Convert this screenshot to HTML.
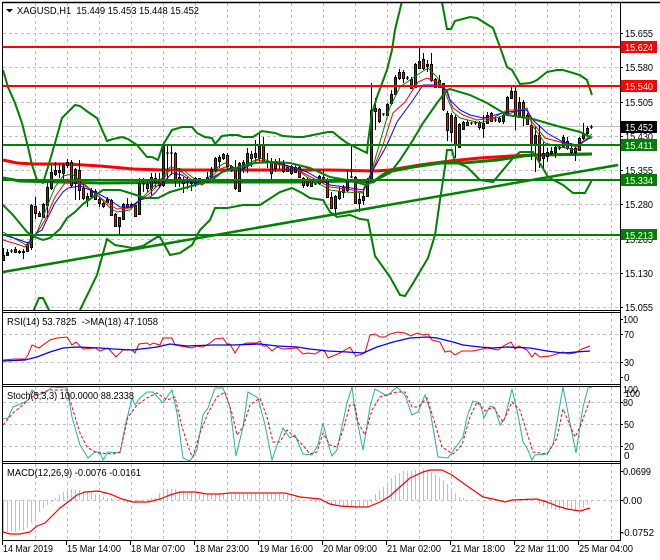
<!DOCTYPE html>
<html><head><meta charset="utf-8"><title>XAGUSD,H1</title>
<style>
html,body{margin:0;padding:0;background:#fff}
svg{display:block}
text{font-family:"Liberation Sans",sans-serif;font-size:10px;fill:#000}
.w{fill:#fff}
</style></head>
<body>
<svg width="660" height="560" viewBox="0 0 660 560" xmlns="http://www.w3.org/2000/svg">
<defs>
<clipPath id="m"><rect x="3" y="3" width="617" height="307"/></clipPath>
<clipPath id="s"><rect x="3" y="387" width="617" height="74"/></clipPath>
</defs>
<rect width="660" height="560" fill="#fff"/>
<!-- grid -->
<g fill="none" stroke="#c0c0c0" stroke-width="1" stroke-dasharray="3 3">
<path d="M35.5 3V310M67.5 3V310M99.5 3V310M131.5 3V310M163.5 3V310M195.5 3V310M227.5 3V310M259.5 3V310M291.5 3V310M323.5 3V310M355.5 3V310M387.5 3V310M419.5 3V310M451.5 3V310M483.5 3V310M515.5 3V310M547.5 3V310M579.5 3V310M611.5 3V310"/>
<path d="M35.5 313V384M67.5 313V384M99.5 313V384M131.5 313V384M163.5 313V384M195.5 313V384M227.5 313V384M259.5 313V384M291.5 313V384M323.5 313V384M355.5 313V384M387.5 313V384M419.5 313V384M451.5 313V384M483.5 313V384M515.5 313V384M547.5 313V384M579.5 313V384M611.5 313V384"/>
<path d="M35.5 387V461M67.5 387V461M99.5 387V461M131.5 387V461M163.5 387V461M195.5 387V461M227.5 387V461M259.5 387V461M291.5 387V461M323.5 387V461M355.5 387V461M387.5 387V461M419.5 387V461M451.5 387V461M483.5 387V461M515.5 387V461M547.5 387V461M579.5 387V461M611.5 387V461"/>
<path d="M35.5 464V540M67.5 464V540M99.5 464V540M131.5 464V540M163.5 464V540M195.5 464V540M227.5 464V540M259.5 464V540M291.5 464V540M323.5 464V540M355.5 464V540M387.5 464V540M419.5 464V540M451.5 464V540M483.5 464V540M515.5 464V540M547.5 464V540M579.5 464V540M611.5 464V540"/>
<path d="M3 33.5H620M3 67.5H620M3 102.5H620M3 136.5H620M3 170.5H620M3 204.5H620M3 239.5H620M3 273.5H620M3 307.5H620"/>
<path d="M3 334.5H620M3 362.5H620M3 402.5H620M3 424.5H620M3 446.5H620M3 500.5H620"/>
</g>
<path d="M3 126.5H620" stroke="#c0c0c0" stroke-width="1"/>
<g clip-path="url(#m)" fill="none">
<!-- slow MAs -->
<polyline stroke="#f00" stroke-width="3" points="3,160 17,163 33,164 67,164 100,166 133,169 163,170 200,170 233,170 267,170 300,170 330,170 375,171 390,170 420,165 450,161 480,158 510,156 540,155 592,154"/>
<polyline stroke="#008000" stroke-width="3" points="3,178 20,181 100,183 200,182 300,182 347,181 373,182 387,172 413,167 440,163 463,163 497,160 530,155 592,154"/>
<!-- candles -->
<path stroke="#000" stroke-width="1" d="M3.5 248V260M7.5 249V255M11.5 249V253M15.5 247V253M19.5 250V254M23.5 249V259M27.5 242V252M31.5 204V250M35.5 197V219M39.5 211V217M43.5 203V218M47.5 183V217M51.5 165V190M55.5 162V176M59.5 165V178M63.5 163V180M67.5 159V168M71.5 160V187M75.5 168V200M79.5 160V200M83.5 183V200M87.5 193V207M91.5 188V197M95.5 189V200M99.5 198V207M103.5 201V208M107.5 197V203M111.5 199V216M115.5 213V227M119.5 217V235M123.5 203V220M127.5 198V208M131.5 203V208M135.5 203V217M139.5 178V215M143.5 178V192M147.5 179V193M151.5 173V195M155.5 173V187M159.5 173V188M163.5 144V187M167.5 145V179M171.5 144V175M175.5 152V187M179.5 168V187M183.5 177V193M187.5 177V189M191.5 182V191M195.5 177V187M199.5 178V184M203.5 179V184M207.5 172V183M211.5 167V178M215.5 157V172M219.5 155V168M223.5 153V160M227.5 153V170M231.5 165V172M235.5 160V190M239.5 162V192M243.5 160V173M247.5 148V173M251.5 151V167M255.5 140V162M259.5 132V163M263.5 137V163M267.5 153V168M271.5 158V179M275.5 159V172M279.5 158V169M283.5 160V173M287.5 165V172M291.5 165V175M295.5 165V173M299.5 165V178M303.5 177V188M307.5 177V187M311.5 179V187M315.5 183V185M319.5 175V185M323.5 169V182M327.5 178V198M331.5 192V209M335.5 195V213M339.5 187V200M343.5 185V198M347.5 170V192M351.5 145V178M355.5 176V204M359.5 193V212M363.5 192V205M367.5 178V197M371.5 83V183M375.5 98V130M379.5 108V123M383.5 113V116M387.5 103V116M391.5 90V105M395.5 75V95M399.5 69V80M403.5 70V83M407.5 76V80M411.5 77V89M415.5 63V88M419.5 47V68M423.5 53V70M427.5 60V72M431.5 53V82M435.5 78V88M439.5 75V87M443.5 83V111M447.5 111V141M451.5 113V142M455.5 115V158M459.5 123V148M463.5 121V130M467.5 120V126M471.5 122V125M475.5 121V125M479.5 121V130M483.5 115V138M487.5 112V124M491.5 112V122M495.5 117V122M499.5 117V123M503.5 113V124M507.5 96V116M511.5 87V99M515.5 87V130M519.5 97V118M523.5 100V126M527.5 113V125M531.5 122V160M535.5 127V172M539.5 125V168M543.5 142V169M547.5 148V162M551.5 147V155M555.5 145V158M559.5 145V150M563.5 135V148M567.5 137V150M571.5 146V155M575.5 144V161M579.5 137V151M583.5 123V140M587.5 126V135M591.5 125V129M10 251h3M142 184h3M166 153h3M170 153h3M186 182h3M202 182h3M266 161h3M314 184h3M350 177h3M382 114h3M406 78h3M470 123h3M474 123h3M494 120h3M558 148h3M590 127h3"/>
<path stroke="#000" stroke-width="1" fill="#006400" d="M2.500 255.500h2v5h-2zM6.500 252.500h2v3h-2zM14.500 249.500h2v3h-2zM22.500 251.500h2v1h-2zM26.500 244.500h2v7h-2zM30.500 205.500h2v42h-2zM42.500 204.500h2v13h-2zM46.500 187.500h2v18h-2zM50.500 172.500h2v16h-2zM54.500 170.500h2v4h-2zM58.500 170.500h2v2h-2zM62.500 165.500h2v8h-2zM66.500 162.500h2v3h-2zM74.500 169.500h2v14h-2zM86.500 196.500h2v4h-2zM90.500 190.500h2v6h-2zM106.500 199.500h2v3h-2zM118.500 217.500h2v9h-2zM122.500 204.500h2v15h-2zM130.500 204.500h2v2h-2zM138.500 183.500h2v31h-2zM150.500 177.500h2v11h-2zM158.500 182.500h2v3h-2zM162.500 146.500h2v39h-2zM190.500 182.500h2v1h-2zM194.500 178.500h2v5h-2zM206.500 177.500h2v5h-2zM210.500 169.500h2v8h-2zM214.500 158.500h2v12h-2zM218.500 157.500h2v4h-2zM222.500 154.500h2v4h-2zM238.500 163.500h2v28h-2zM242.500 162.500h2v6h-2zM246.500 153.500h2v10h-2zM254.500 153.500h2v4h-2zM258.500 146.500h2v12h-2zM290.500 166.500h2v7h-2zM294.500 167.500h2v5h-2zM306.500 179.500h2v6h-2zM318.500 176.500h2v7h-2zM334.500 196.500h2v12h-2zM338.500 191.500h2v7h-2zM342.500 187.500h2v5h-2zM346.500 179.500h2v11h-2zM358.500 199.500h2v4h-2zM362.500 196.500h2v4h-2zM366.500 180.500h2v16h-2zM370.500 110.500h2v72h-2zM374.500 108.500h2v3h-2zM386.500 104.500h2v11h-2zM390.500 94.500h2v9h-2zM394.500 77.500h2v17h-2zM398.500 72.500h2v6h-2zM414.500 64.500h2v23h-2zM418.500 61.500h2v7h-2zM426.500 64.500h2v2h-2zM450.500 115.500h2v17h-2zM458.500 124.500h2v23h-2zM462.500 122.500h2v7h-2zM482.500 123.500h2v5h-2zM486.500 115.500h2v8h-2zM498.500 118.500h2v3h-2zM502.500 115.500h2v6h-2zM506.500 97.500h2v18h-2zM510.500 91.500h2v7h-2zM518.500 102.500h2v15h-2zM534.500 135.500h2v10h-2zM542.500 153.500h2v5h-2zM546.500 152.500h2v4h-2zM550.500 151.500h2v2h-2zM554.500 147.500h2v5h-2zM562.500 137.500h2v10h-2zM570.500 148.500h2v4h-2zM574.500 148.500h2v4h-2zM578.500 138.500h2v12h-2zM582.500 133.500h2v5h-2zM586.500 128.500h2v5h-2z"/>
<path stroke="#000" stroke-width="1" fill="#f00" d="M18.500 251.500h2v1h-2zM34.500 206.500h2v7h-2zM38.500 213.500h2v3h-2zM70.500 162.500h2v23h-2zM78.500 170.500h2v20h-2zM82.500 188.500h2v10h-2zM94.500 191.500h2v8h-2zM98.500 199.500h2v4h-2zM102.500 203.500h2v3h-2zM110.500 200.500h2v15h-2zM114.500 214.500h2v12h-2zM126.500 204.500h2v3h-2zM134.500 205.500h2v11h-2zM146.500 184.500h2v4h-2zM154.500 178.500h2v4h-2zM174.500 153.500h2v27h-2zM178.500 177.500h2v3h-2zM182.500 179.500h2v4h-2zM198.500 178.500h2v5h-2zM226.500 155.500h2v11h-2zM230.500 166.500h2v4h-2zM234.500 169.500h2v19h-2zM250.500 154.500h2v4h-2zM262.500 145.500h2v17h-2zM270.500 162.500h2v11h-2zM274.500 161.500h2v7h-2zM278.500 162.500h2v2h-2zM282.500 163.500h2v8h-2zM286.500 167.500h2v4h-2zM298.500 167.500h2v10h-2zM302.500 178.500h2v7h-2zM310.500 180.500h2v6h-2zM322.500 177.500h2v4h-2zM326.500 180.500h2v17h-2zM330.500 197.500h2v11h-2zM354.500 177.500h2v26h-2zM378.500 109.500h2v12h-2zM402.500 72.500h2v6h-2zM410.500 79.500h2v9h-2zM422.500 59.500h2v9h-2zM430.500 64.500h2v16h-2zM434.500 79.500h2v8h-2zM438.500 80.500h2v7h-2zM442.500 83.500h2v26h-2zM446.500 113.500h2v17h-2zM454.500 117.500h2v28h-2zM466.500 122.500h2v3h-2zM478.500 122.500h2v5h-2zM490.500 113.500h2v8h-2zM514.500 91.500h2v24h-2zM522.500 102.500h2v15h-2zM526.500 115.500h2v9h-2zM530.500 125.500h2v20h-2zM538.500 135.500h2v25h-2zM566.500 141.500h2v7h-2z"/>
<!-- fast MAs -->
<polyline stroke="#008000" stroke-width="1" points="3,232 28,246 37,232 43,217 55,187 63,176 72,174 83,183 97,195 110,208 117,212 130,210 140,200 148,192 163,177 170,167 182,169 192,177 202,185 208,178 218,167 225,163 235,168 245,165 260,158 272,162 295,168 307,177 330,190 345,192 363,193 372,170 380,142 390,107 400,87 417,75 428,68 437,77 447,97 453,112 460,118 480,123 527,108 532,125 545,143 560,147 577,150 583,142 592,134"/>
<polyline stroke="#f00" stroke-width="1" points="3,240 20,245 25,247 37,233 45,220 55,197 65,183 75,181 87,187 97,195 110,205 117,209 130,208 140,200 148,195 163,180 170,169 182,172 192,180 202,185 208,181 218,170 225,167 235,170 245,168 258,160 272,163 295,168 307,175 330,187 347,189 363,192 372,172 383,145 393,113 405,102 418,82 427,78 437,82 447,93 453,108 463,115 477,120 493,118 507,110 527,110 532,122 545,138 560,142 577,147 583,141 590,138"/>
<polyline stroke="#00f" stroke-width="1" points="3,235 17,239 28,243 37,233 42,230 48,217 55,203 63,192 68,188 80,186 90,190 97,193 110,200 120,207 130,207 140,200 150,197 155,193 163,183 172,173 182,175 192,182 202,183 208,180 222,172 232,168 242,169 255,163 265,162 278,163 295,168 307,172 330,185 345,187 363,190 372,172 387,145 397,122 413,100 423,85 437,85 447,90 450,100 460,110 470,115 483,118 507,112 527,110 533,120 547,133 563,142 577,145 583,142 590,138"/>
<!-- trend -->
<path d="M3 272L618 165" stroke="#008000" stroke-width="2.500"/>
<!-- Bollinger -->
<polyline stroke="#008000" stroke-width="2" points="3,70 8,87 15,103 22,123 28,147 32,165 37,180 43,183 48,167 55,143 62,118 67,113 75,105 80,106 88,112 97,118 107,141 113,139 122,137 128,139 137,145 147,157 152,157 158,160 163,145 172,130 182,127 192,127 197,133 205,137 212,138 215,144 222,136 230,135 238,135 243,137 253,137 262,131 275,133 283,136 297,137 303,137 313,135 328,132 333,132 340,138 347,143 367,153 368,142 372,113 377,97 387,70 392,50 395,30 403,-3"/>
<polyline stroke="#008000" stroke-width="2" points="441,-3 447,29 451,29 455,21 470,17 477,18 493,28 500,47 507,67 512,70 520,84 530,83 533,82 537,80 547,72 557,70 563,70 580,75 587,80 592,95"/>
<polyline stroke="#008000" stroke-width="2" points="3,205 13,215 27,232 35,237 43,240 50,238 60,229 67,218 75,212 83,204 93,197 103,190 120,190 133,194 145,198 158,198 170,192 188,187 212,180 222,172 240,167 255,163 275,162 290,163 310,168 330,177 347,180 367,185 370,183 390,173 400,160 413,140 423,123 437,103 447,90 450,89 470,95 487,103 507,115 533,119 557,126 580,132 592,138"/>
<polyline stroke="#008000" stroke-width="2" points="33,312 39,298 43,298 50,312"/>
<polyline stroke="#008000" stroke-width="2" points="79,312 97,275 107,239 115,245 133,248 143,246 157,237 160,237 170,255 180,253 192,245 200,230 210,220 215,208 227,208 243,205 260,205 280,192 292,188 302,193 310,198 323,200 330,212 337,217 350,215 360,219 368,220 375,256 390,277 400,295 405,296 412,285 428,258 435,235 440,200 445,167 447,150 452,150 455,162 467,167 480,180 493,182 503,170 513,158 520,152 533,152 538,160 548,177 563,185 573,193 585,193 592,180"/>
<!-- levels -->
<path stroke="#f00" stroke-width="2" d="M3 47H620M3 86H620"/>
<path stroke="#008000" stroke-width="2" d="M3 145H620M3 180H620M3 235H620"/>
</g>
<!-- RSI -->
<g fill="none" stroke-width="1">
<polyline stroke="#f00" points="3,360 15,359 25,359 28,355 32,345 39,348 50,340 57,338 67,337 72,345 76,342 83,349 95,348 100,351 108,348 116,357 123,350 132,350 135,353 139,344 147,343 150,345 153,343 160,345 163,338 172,338 175,345 192,348 197,346 203,347 210,343 215,339 223,338 227,344 230,344 235,353 240,345 247,343 257,343 260,341 263,346 267,346 272,351 277,347 283,349 297,348 303,354 308,353 315,354 322,350 325,352 328,358 335,355 340,353 350,347 353,352 356,356 365,353 370,335 375,334 380,337 385,337 390,334 398,332 405,333 411,336 417,333 423,335 428,334 432,340 440,342 445,352 450,351 455,355 462,351 473,351 487,348 498,350 505,345 511,342 515,349 519,346 527,350 532,357 535,353 540,357 550,356 563,352 568,354 575,353 582,349 590,346"/>
<polyline stroke="#00f" stroke-width="1.300" points="3,361 25,360 37,357 50,352 63,348 77,347 100,348 113,349 133,350 157,347 170,344 187,346 213,345 233,345 260,344 277,346 297,347 310,349 328,351 347,352 363,353 377,347 393,342 410,338 427,337 437,338 453,342 463,345 480,347 493,348 507,347 530,348 547,351 563,353 590,351"/>
</g>
<!-- Stoch -->
<g fill="none" stroke-width="1" clip-path="url(#s)">
<polyline stroke="#20b2aa" points="3,419 8,418 13,407 18,405 23,403 28,400 32,390 38,395 45,393 52,387 67,388 72,417 80,445 88,458 95,452 100,452 103,460 108,452 120,453 125,427 132,398 135,405 140,398 147,392 153,392 163,403 172,390 177,413 183,458 190,461 197,450 203,415 208,408 215,388 223,388 230,407 236,456 243,427 248,392 258,398 265,425 272,460 283,428 290,438 295,435 303,454 312,455 318,445 323,423 328,443 330,450 332,456 337,450 347,403 352,387 355,410 363,450 370,407 375,389 387,396 397,387 405,395 412,415 418,412 425,395 430,410 438,457 448,458 463,437 467,417 473,401 480,403 484,418 490,406 495,408 500,425 505,418 512,389 518,415 523,442 527,448 532,460 535,455 547,454 553,445 563,387 570,423 576,453 583,407 588,388 592,387"/>
<polyline stroke="#f00" stroke-dasharray="3 2" points="3,425 13,413 23,405 30,398 40,393 50,390 67,390 72,407 80,433 87,447 97,453 113,454 120,452 128,417 137,405 147,398 157,393 167,400 175,397 182,427 190,452 193,457 200,433 208,413 217,397 225,392 232,413 237,435 243,427 250,405 260,398 267,417 273,442 280,442 287,430 300,442 310,454 317,452 323,433 330,445 337,447 343,430 350,405 355,405 358,422 365,435 372,410 380,397 397,392 405,392 412,407 418,407 427,398 433,417 442,447 453,454 462,445 470,417 477,402 485,411 493,407 503,422 512,402 520,410 527,433 533,452 547,454 557,438 563,409 575,437 580,427 590,400"/>
</g>
<!-- MACD hist -->
<path fill="none" stroke="#c0c0c0" stroke-width="1" d="M3.500 500V532M7.500 500V532M11.500 500V532M15.500 500V532M19.500 500V530M23.500 500V530M27.500 500V528M31.500 500V523M35.500 500V518M39.500 500V512M43.500 500V508M47.500 500V505M51.500 500V502M55.500 500V498M59.500 500V495M63.500 500V492M67.500 500V488M71.500 500V489M75.500 500V490M79.500 500V490M83.500 500V491M87.500 500V492M91.500 500V492M95.500 500V494M99.500 500V496M103.500 500V497M107.500 500V498M111.500 500V498M115.500 500V499M123.500 500V502M127.500 500V503M131.500 500V503M135.500 500V503M139.500 500V502M143.500 500V501M147.500 500V499M151.500 500V498M155.500 500V498M159.500 500V493M163.500 500V491M167.500 500V489M171.500 500V489M175.500 500V489M179.500 500V492M183.500 500V492M187.500 500V493M191.500 500V492M195.500 500V494M199.500 500V494M203.500 500V494M207.500 500V494M211.500 500V494M215.500 500V494M219.500 500V494M223.500 500V494M227.500 500V494M231.500 500V494M235.500 500V494M239.500 500V494M243.500 500V494M247.500 500V494M251.500 500V494M255.500 500V494M259.500 500V494M263.500 500V494M267.500 500V494M271.500 500V494M275.500 500V494M279.500 500V494M283.500 500V494M287.500 500V495M291.500 500V496M295.500 500V498M299.500 500V499M311.500 500V501M315.500 500V502M319.500 500V502M323.500 500V503M327.500 500V504M331.500 500V504M335.500 500V505M339.500 500V506M343.500 500V506M347.500 500V506M351.500 500V507M355.500 500V507M359.500 500V507M363.500 500V507M367.500 500V507M371.500 500V503M375.500 500V494M379.500 500V490M383.500 500V487M387.500 500V482M391.500 500V478M395.500 500V475M399.500 500V473M403.500 500V471M407.500 500V471M411.500 500V471M415.500 500V470M419.500 500V470M423.500 500V469M427.500 500V470M431.500 500V472M435.500 500V474M439.500 500V477M443.500 500V480M447.500 500V484M451.500 500V488M455.500 500V493M459.500 500V497M463.500 500V498M539.500 500V504M543.500 500V506M547.500 500V508M551.500 500V509M555.500 500V510M559.500 500V510M563.500 500V509M567.500 500V509M571.500 500V510M575.500 500V510M579.500 500V509M583.500 500V508M587.500 500V505M591.500 500V502"/>
<polyline fill="none" stroke="#f00" stroke-width="1.200" points="3,532 10,534 20,534 30,532 37,526 45,523 53,515 60,508 68,502 77,495 85,492 98,491 110,494 122,499 133,502 148,502 160,499 170,495 180,492 195,492 207,494 220,494 230,493 285,493 300,497 320,499 330,504 340,506 357,507 368,507 380,502 390,496 400,487 410,478 423,472 430,470 442,470 452,475 463,483 473,490 483,497 493,499 505,502 512,500 537,499 547,502 557,506 567,509 580,511 590,508"/>
<!-- frames -->
<g stroke="#000" stroke-width="1" fill="none">
<path d="M2.500 2.500H660" stroke-width="1.500"/>
<path d="M2.500 2V540.500H620.500V3"/>
<path d="M3 310.500H620.500M3 312.500H620.500M3 384.500H620.500M3 386.500H620.500M3 461.500H620.500M3 463.500H620.500"/>
<path d="M2.500 540V545M66.500 540V545M130.500 540V545M194.500 540V545M258.500 540V545M322.500 540V545M386.500 540V545M450.500 540V545M514.500 540V545M578.500 540V545"/>
<path d="M620 33.500h3M620 67.500h3M620 102.500h3M620 136.500h3M620 170.500h3M620 204.500h3M620 239.500h3M620 273.500h3M620 307.500h3M620 319.500h3M620 334.500h3M620 362.500h3M620 377.500h3M620 402.500h3M620 424.500h3M620 446.500h3M620 471.500h3M620 500.500h3M620 532.500h3"/>
</g>
<path d="M6 9h7l-3.500 3.500z" fill="#000"/>
<!-- legends -->
<text x="17" y="14" textLength="182" lengthAdjust="spacingAndGlyphs" xml:space="preserve">XAGUSD,H1  15.449 15.453 15.448 15.452</text>
<text x="7" y="325" textLength="151" lengthAdjust="spacingAndGlyphs" xml:space="preserve">RSI(14) 53.7825  -&gt;MA(18) 47.1058</text>
<text x="7" y="399" textLength="127" lengthAdjust="spacingAndGlyphs">Stoch(5,3,3) 100.0000 88.2338</text>
<text x="7" y="476" textLength="134" lengthAdjust="spacingAndGlyphs">MACD(12,26,9) -0.0076 -0.0161</text>
<!-- price axis -->
<g>
<text x="625" y="37" textLength="28" lengthAdjust="spacingAndGlyphs">15.655</text>
<text x="625" y="71" textLength="28" lengthAdjust="spacingAndGlyphs">15.580</text>
<text x="625" y="106" textLength="28" lengthAdjust="spacingAndGlyphs">15.505</text>
<text x="625" y="140" textLength="28" lengthAdjust="spacingAndGlyphs">15.430</text>
<text x="625" y="174" textLength="28" lengthAdjust="spacingAndGlyphs">15.355</text>
<text x="625" y="208" textLength="28" lengthAdjust="spacingAndGlyphs">15.280</text>
<text x="625" y="243" textLength="28" lengthAdjust="spacingAndGlyphs">15.205</text>
<text x="625" y="277" textLength="28" lengthAdjust="spacingAndGlyphs">15.130</text>
<text x="625" y="311" textLength="28" lengthAdjust="spacingAndGlyphs">15.055</text>
<rect x="621" y="41" width="36" height="12" fill="#f00"/>
<rect x="621" y="80" width="36" height="12" fill="#f00"/>
<rect x="621" y="121" width="36" height="12" fill="#000"/>
<rect x="621" y="139" width="36" height="12" fill="#008000"/>
<rect x="621" y="174" width="36" height="12" fill="#008000"/>
<rect x="621" y="229" width="36" height="11" fill="#008000"/>
<text class="w" x="625" y="51" textLength="28" lengthAdjust="spacingAndGlyphs">15.624</text>
<text class="w" x="625" y="90" textLength="28" lengthAdjust="spacingAndGlyphs">15.540</text>
<text class="w" x="625" y="131" textLength="28" lengthAdjust="spacingAndGlyphs">15.452</text>
<text class="w" x="625" y="149" textLength="28" lengthAdjust="spacingAndGlyphs">15.411</text>
<text class="w" x="625" y="184" textLength="28" lengthAdjust="spacingAndGlyphs">15.334</text>
<text class="w" x="625" y="239" textLength="28" lengthAdjust="spacingAndGlyphs">15.213</text>
<text x="623" y="323" textLength="15" lengthAdjust="spacingAndGlyphs">100</text>
<text x="624" y="338" textLength="10" lengthAdjust="spacingAndGlyphs">70</text>
<text x="624" y="366" textLength="10" lengthAdjust="spacingAndGlyphs">30</text>
<text x="624" y="381">0</text>
<text x="623" y="393" textLength="15" lengthAdjust="spacingAndGlyphs">100</text>
<text x="625" y="397" textLength="15" lengthAdjust="spacingAndGlyphs">100</text>
<text x="623" y="406" textLength="10" lengthAdjust="spacingAndGlyphs">80</text>
<text x="624" y="428" textLength="10" lengthAdjust="spacingAndGlyphs">50</text>
<text x="624" y="450" textLength="10" lengthAdjust="spacingAndGlyphs">20</text>
<text x="624" y="459">0</text>
<text x="623" y="475" textLength="28" lengthAdjust="spacingAndGlyphs">0.0699</text>
<text x="623" y="504" textLength="19" lengthAdjust="spacingAndGlyphs">0.00</text>
<text x="621" y="536" textLength="33" lengthAdjust="spacingAndGlyphs">-0.0752</text>
</g>
<!-- time axis -->
<text x="3" y="552" textLength="50" lengthAdjust="spacingAndGlyphs">14 Mar 2019</text>
<text x="67" y="552" textLength="54" lengthAdjust="spacingAndGlyphs">15 Mar 14:00</text>
<text x="131" y="552" textLength="54" lengthAdjust="spacingAndGlyphs">18 Mar 07:00</text>
<text x="195" y="552" textLength="54" lengthAdjust="spacingAndGlyphs">18 Mar 23:00</text>
<text x="259" y="552" textLength="54" lengthAdjust="spacingAndGlyphs">19 Mar 16:00</text>
<text x="323" y="552" textLength="54" lengthAdjust="spacingAndGlyphs">20 Mar 09:00</text>
<text x="387" y="552" textLength="54" lengthAdjust="spacingAndGlyphs">21 Mar 02:00</text>
<text x="451" y="552" textLength="54" lengthAdjust="spacingAndGlyphs">21 Mar 18:00</text>
<text x="515" y="552" textLength="54" lengthAdjust="spacingAndGlyphs">22 Mar 11:00</text>
<text x="579" y="552" textLength="54" lengthAdjust="spacingAndGlyphs">25 Mar 04:00</text>
</svg>
</body></html>
